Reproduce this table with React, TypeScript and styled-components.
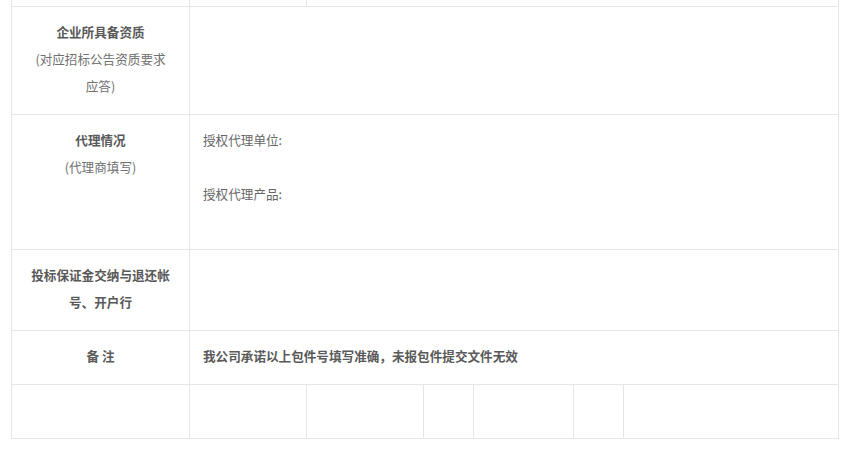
import * as React from 'react';
import styled, { createGlobalStyle } from 'styled-components';

const GlobalStyle = createGlobalStyle`
  html, body {
    margin: 0;
    padding: 0;
    background: #ffffff;
  }
  body {
    font-family: "Noto Sans CJK SC", "Noto Sans", sans-serif;
    font-size: 12.6px;
    color: #666666;
  }
`;

const Page = styled.div`
  height: 449px;
  overflow: hidden;
  padding: 0 11px;
`;

const FormTable = styled.table`
  width: 827px;
  margin-top: -48px;
  border-collapse: collapse;
  table-layout: fixed;
`;

const Cell = styled.td<{ $height?: number }>`
  border: 1px solid #e6e6e6;
  padding: 11px 13px 15px;
  vertical-align: top;
  line-height: 27px;
  height: ${(p) => (p.$height ? `${p.$height}px` : 'auto')};
  box-sizing: border-box;
`;

const LabelCell = styled(Cell)`
  text-align: center;
  padding-left: 18px;
  padding-right: 18px;
`;

const Strong = styled.div`
  font-weight: bold;
  color: #595959;
`;

const Note = styled.div`
  color: #707070;
`;

const Field = styled.div<{ $gap?: boolean }>`
  color: #666666;
  margin-bottom: ${(p) => (p.$gap ? '27px' : '0')};
`;

const EmptyRow = ({ cells }: { cells: number }) => (
  <tr>
    {Array.from({ length: cells }).map((_, i) => (
      <Cell key={i} $height={54} />
    ))}
  </tr>
);

export default function App() {
  return (
    <Page>
      <GlobalStyle />
      <FormTable>
        <colgroup>
          <col style={{ width: 178 }} />
          <col style={{ width: 117 }} />
          <col style={{ width: 117 }} />
          <col style={{ width: 50 }} />
          <col style={{ width: 100 }} />
          <col style={{ width: 50 }} />
          <col style={{ width: 215 }} />
        </colgroup>
        <tbody>
          <tr>
            <Cell $height={54} />
            <Cell $height={54} />
            <Cell $height={54} colSpan={5} />
          </tr>
          <tr>
            <LabelCell>
              <Strong>企业所具备资质</Strong>
              <Note>(对应招标公告资质要求应答)</Note>
            </LabelCell>
            <Cell colSpan={6} />
          </tr>
          <tr>
            <LabelCell>
              <Strong>代理情况</Strong>
              <Note>(代理商填写)</Note>
            </LabelCell>
            <Cell colSpan={6}>
              <Field $gap>授权代理单位:</Field>
              <Field $gap>授权代理产品:</Field>
            </Cell>
          </tr>
          <tr>
            <LabelCell>
              <Strong>投标保证金交纳与退还帐号、开户行</Strong>
            </LabelCell>
            <Cell colSpan={6} />
          </tr>
          <tr>
            <LabelCell>
              <Strong>备 注</Strong>
            </LabelCell>
            <Cell colSpan={6}>
              <Strong>我公司承诺以上包件号填写准确，未报包件提交文件无效</Strong>
            </Cell>
          </tr>
          <EmptyRow cells={7} />
        </tbody>
      </FormTable>
    </Page>
  );
}
